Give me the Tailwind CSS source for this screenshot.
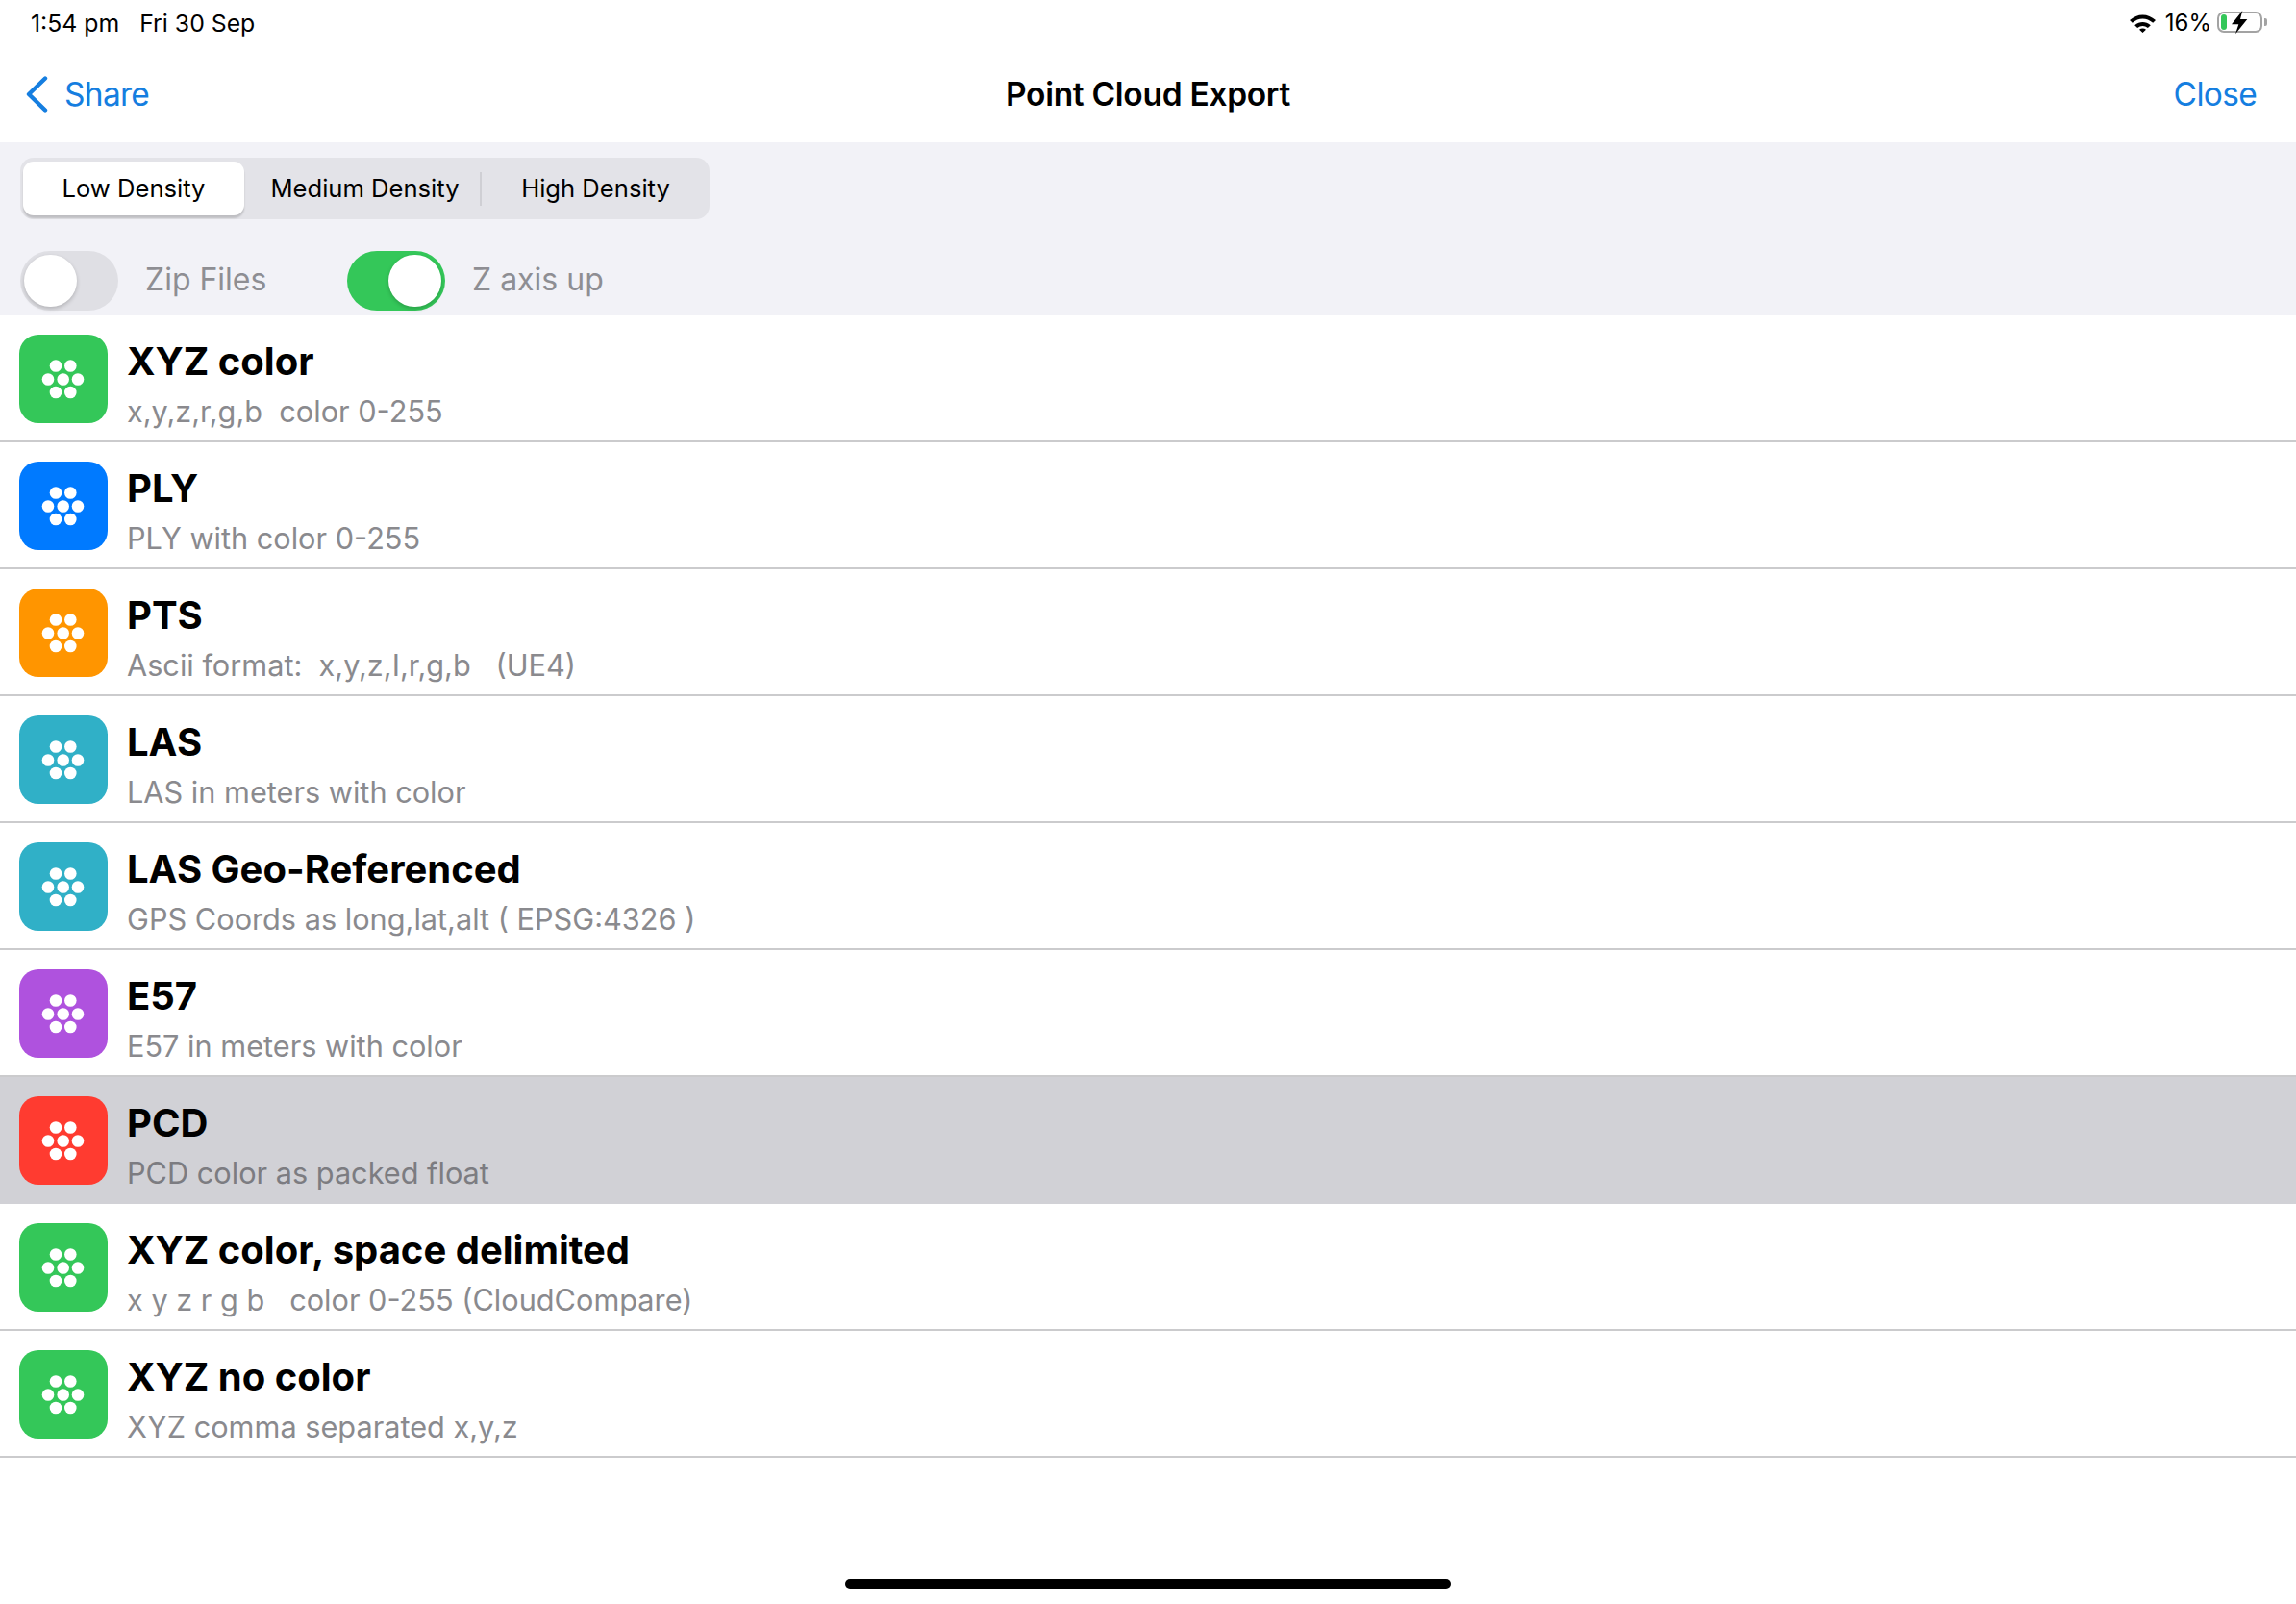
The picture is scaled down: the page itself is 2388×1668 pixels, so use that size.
<!DOCTYPE html>
<html lang="en">
<head>
  <meta charset="UTF-8" />
  <title>Point Cloud Export</title>
  <script src="https://cdn.jsdelivr.net/npm/@tailwindcss/browser@4"></script>
</head>
<body class="bg-white font-['Inter','Liberation_Sans',sans-serif] text-black">
  <svg class="hidden">
    <symbol id="dots" viewBox="0 0 92 92">
      <g fill="#fff">
        <circle cx="38" cy="32.5" r="6.3"/><circle cx="53.3" cy="32.5" r="6.3"/>
        <circle cx="30" cy="46.5" r="6.3"/><circle cx="45.7" cy="46.5" r="6.3"/><circle cx="61" cy="46.5" r="6.3"/>
        <circle cx="38" cy="60" r="6.3"/><circle cx="53.3" cy="60" r="6.3"/>
      </g>
    </symbol>
  </svg>

  <div class="w-[2388px] h-[1668px] relative overflow-hidden flex flex-col">
    <!-- Status bar -->
    <div class="h-[48px] flex items-center justify-between pl-[32px] pr-[30px] text-[24.8px] leading-none">
      <div class="flex gap-[21px]"><span>1:54 pm</span><span>Fri 30 Sep</span></div>
      <div class="flex items-center">
        <svg class="w-[27px] h-[20px] mb-[1px]" viewBox="0 0 27 20"><path d="M0 7 C8 -.5 19 -.5 27 7 L24.200 9.800 C17.500 4 9.500 4 2.800 9.800Z M5.200 12.200 C10.500 7.800 16.500 7.800 21.800 12.200 L18.900 15.100 C15.500 12.300 11.500 12.300 8.100 15.100Z M10 16.800 C12 15.100 15 15.100 17 16.800 L13.500 20Z" fill="#000"/></svg>
        <span class="ml-[10px] text-[24px]">16%</span>
        <div class="ml-[6px] mb-[2px] w-[47px] h-[22px] rounded-[7px] border-2 border-[#a3a3a3] relative">
          <div class="absolute left-[2px] top-[1px] bottom-[1px] w-[6px] rounded-[3px] bg-[#34c759]"></div>
          <svg class="absolute left-[13px] top-[-3px] w-[17px] h-[25px]" viewBox="0 0 17 25"><path d="M11.300 0 L0 14.300 H7.300 L4 24.300 L16.300 9 H9Z" fill="#000"/></svg>
        </div>
        <div class="ml-[2px] mb-[2px] w-[3px] h-[8px] rounded-r-[2px] bg-[#a3a3a3]"></div>
      </div>
    </div>

    <!-- Nav bar -->
    <div class="h-[100px] grid grid-cols-[1fr_auto_1fr] items-center text-[33.5px] tracking-[-0.7px] px-[26px]">
      <div class="flex items-center text-[#157ee0]">
        <svg class="w-[24px] h-[38px]" viewBox="0 0 24 38"><path d="M21 2.500 L4 19 L21 35.500" fill="none" stroke="#157ee0" stroke-width="4.400" stroke-linecap="round" stroke-linejoin="round"/></svg>
        <span class="ml-[17px]">Share</span>
      </div>
      <div class="text-center font-semibold tracking-[-0.3px]">Point Cloud Export</div>
      <div class="text-right text-[#157ee0] pr-[15px]">Close</div>
    </div>

    <!-- Options -->
    <div class="h-[180px] bg-[#f2f2f7] pl-[21px]">
      <div class="mt-[16px] w-[717px] h-[64px] rounded-[14px] bg-[#e3e3e8] relative flex items-center text-[25.6px]">
        <div class="ml-[3px] w-[230px] h-[56px] rounded-[11px] bg-white shadow-[0_3px_2px_rgba(0,0,0,0.16)] flex items-center justify-center">Low Density</div>
        <div class="w-[245px] pl-[6px] text-center">Medium Density</div>
        <div class="w-[2px] h-[35px] bg-[#cfcfd4]"></div>
        <div class="w-[237px] text-center">High Density</div>
      </div>
      <div class="mt-[33px] flex items-center text-[32px] text-[#8e8e93]">
        <div class="w-[102px] h-[62px] rounded-full bg-[#dfdfe4] p-[4px] flex justify-start">
          <div class="w-[55px] h-[54px] rounded-full bg-white shadow-[0_2px_4px_rgba(0,0,0,0.2)]"></div>
        </div>
        <span class="ml-[28px] w-[210px] mb-[2px]">Zip Files</span>
        <div class="w-[102px] h-[62px] rounded-full bg-[#34c759] p-[4px] flex justify-end">
          <div class="w-[55px] h-[54px] rounded-full bg-white shadow-[0_2px_4px_rgba(0,0,0,0.2)]"></div>
        </div>
        <span class="ml-[28px] mb-[2px]">Z axis up</span>
      </div>
    </div>

    <!-- Export formats -->
    <div>
      <div class="h-[132px] border-b-2 border-[#cbcbcd] flex items-center pl-[20px]">
        <div class="w-[92px] h-[92px] mt-[2px] rounded-[20px] bg-[#34c759]"><svg class="w-full h-full"><use href="#dots"/></svg></div>
        <div class="ml-[20px] pt-[18px]"><div class="text-[40px] leading-[52px] font-bold">XYZ color</div><div class="text-[30.7px] leading-[52px] text-[#8a8a8e]">x,y,z,r,g,b&nbsp; color 0-255</div></div>
      </div>
      <div class="h-[132px] border-b-2 border-[#cbcbcd] flex items-center pl-[20px]">
        <div class="w-[92px] h-[92px] mt-[2px] rounded-[20px] bg-[#007aff]"><svg class="w-full h-full"><use href="#dots"/></svg></div>
        <div class="ml-[20px] pt-[18px]"><div class="text-[40px] leading-[52px] font-bold">PLY</div><div class="text-[30.7px] leading-[52px] text-[#8a8a8e]">PLY with color 0-255</div></div>
      </div>
      <div class="h-[132px] border-b-2 border-[#cbcbcd] flex items-center pl-[20px]">
        <div class="w-[92px] h-[92px] mt-[2px] rounded-[20px] bg-[#ff9500]"><svg class="w-full h-full"><use href="#dots"/></svg></div>
        <div class="ml-[20px] pt-[18px]"><div class="text-[40px] leading-[52px] font-bold">PTS</div><div class="text-[30.7px] leading-[52px] text-[#8a8a8e]">Ascii format:&nbsp; x,y,z,I,r,g,b &nbsp; (UE4)</div></div>
      </div>
      <div class="h-[132px] border-b-2 border-[#cbcbcd] flex items-center pl-[20px]">
        <div class="w-[92px] h-[92px] mt-[2px] rounded-[20px] bg-[#30b0c7]"><svg class="w-full h-full"><use href="#dots"/></svg></div>
        <div class="ml-[20px] pt-[18px]"><div class="text-[40px] leading-[52px] font-bold">LAS</div><div class="text-[30.7px] leading-[52px] text-[#8a8a8e]">LAS in meters with color</div></div>
      </div>
      <div class="h-[132px] border-b-2 border-[#cbcbcd] flex items-center pl-[20px]">
        <div class="w-[92px] h-[92px] mt-[2px] rounded-[20px] bg-[#30b0c7]"><svg class="w-full h-full"><use href="#dots"/></svg></div>
        <div class="ml-[20px] pt-[18px]"><div class="text-[40px] leading-[52px] font-bold">LAS Geo-Referenced</div><div class="text-[30.7px] leading-[52px] text-[#8a8a8e]">GPS Coords as long,lat,alt ( EPSG:4326 )</div></div>
      </div>
      <div class="h-[132px] border-b-2 border-[#cbcbcd] flex items-center pl-[20px]">
        <div class="w-[92px] h-[92px] mt-[2px] rounded-[20px] bg-[#af52de]"><svg class="w-full h-full"><use href="#dots"/></svg></div>
        <div class="ml-[20px] pt-[18px]"><div class="text-[40px] leading-[52px] font-bold">E57</div><div class="text-[30.7px] leading-[52px] text-[#8a8a8e]">E57 in meters with color</div></div>
      </div>
      <div class="h-[132px] bg-[#d1d1d6] border-b-2 border-[#d1d1d6] flex items-center pl-[20px]">
        <div class="w-[92px] h-[92px] mt-[2px] rounded-[20px] bg-[#ff3b30]"><svg class="w-full h-full"><use href="#dots"/></svg></div>
        <div class="ml-[20px] pt-[18px]"><div class="text-[40px] leading-[52px] font-bold">PCD</div><div class="text-[30.7px] leading-[52px] text-[#7c7c81]">PCD color as packed float</div></div>
      </div>
      <div class="h-[132px] border-b-2 border-[#cbcbcd] flex items-center pl-[20px]">
        <div class="w-[92px] h-[92px] mt-[2px] rounded-[20px] bg-[#34c759]"><svg class="w-full h-full"><use href="#dots"/></svg></div>
        <div class="ml-[20px] pt-[18px]"><div class="text-[40px] leading-[52px] font-bold">XYZ color, space delimited</div><div class="text-[30.7px] leading-[52px] text-[#8a8a8e]">x y z r g b &nbsp; color 0-255 (CloudCompare)</div></div>
      </div>
      <div class="h-[132px] border-b-2 border-[#cbcbcd] flex items-center pl-[20px]">
        <div class="w-[92px] h-[92px] mt-[2px] rounded-[20px] bg-[#34c759]"><svg class="w-full h-full"><use href="#dots"/></svg></div>
        <div class="ml-[20px] pt-[18px]"><div class="text-[40px] leading-[52px] font-bold">XYZ no color</div><div class="text-[30.7px] leading-[52px] text-[#8a8a8e]">XYZ comma separated x,y,z</div></div>
      </div>
    </div>

    <!-- Home indicator -->
    <div class="absolute left-[879px] top-[1642px] w-[630px] h-[10px] rounded-full bg-black"></div>
  </div>
</body>
</html>
